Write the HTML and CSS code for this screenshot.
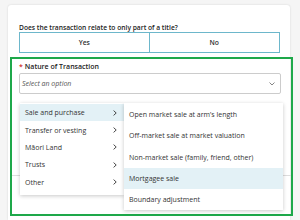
FILE: index.html
```html
<!DOCTYPE html>
<html lang="en">
<head>
    <meta charset="UTF-8">
    <title>Transaction details</title>
    <link rel="stylesheet" href="styles.css">
</head>
<body>

<div class="card">
    <div class="question">
        <div class="question-label">Does the transaction relate to only part of a title?</div>
        <div class="toggle">
            <button class="toggle-btn">Yes</button>
            <button class="toggle-btn">No</button>
        </div>
    </div>

    <div class="field active">
        <label class="field-label"><span class="required">*</span>Nature of Transaction</label>
        <div class="select">
            <span class="placeholder">Select an option</span>
            <svg class="select-arrow" width="6" height="4" viewBox="0 0 6 4">
                <path d="M0.5 0.5 L3 3 L5.5 0.5" fill="none" stroke="#777" stroke-width="0.9"/>
            </svg>
        </div>
        <div class="divider"></div>

        <div class="menus">
            <ul class="menu categories">
                <li class="selected">Sale and purchase <svg width="4" height="6" viewBox="0 0 4 6"><path d="M0.6 0.6 L3.2 3 L0.6 5.4" fill="none" stroke="#333" stroke-width="0.9"/></svg></li>
                <li>Transfer or vesting <svg width="4" height="6" viewBox="0 0 4 6"><path d="M0.6 0.6 L3.2 3 L0.6 5.4" fill="none" stroke="#333" stroke-width="0.9"/></svg></li>
                <li>Māori Land <svg width="4" height="6" viewBox="0 0 4 6"><path d="M0.6 0.6 L3.2 3 L0.6 5.4" fill="none" stroke="#333" stroke-width="0.9"/></svg></li>
                <li>Trusts <svg width="4" height="6" viewBox="0 0 4 6"><path d="M0.6 0.6 L3.2 3 L0.6 5.4" fill="none" stroke="#333" stroke-width="0.9"/></svg></li>
                <li>Other <svg width="4" height="6" viewBox="0 0 4 6"><path d="M0.6 0.6 L3.2 3 L0.6 5.4" fill="none" stroke="#333" stroke-width="0.9"/></svg></li>
            </ul>
            <ul class="menu options">
                <li>Open market sale at arm’s length</li>
                <li>Off-market sale at market valuation</li>
                <li>Non-market sale (family, friend, other)</li>
                <li class="selected">Mortgagee sale</li>
                <li>Boundary adjustment</li>
            </ul>
        </div>
    </div>
</div>

</body>
</html>
```

FILE: styles.css
```css
* {
    box-sizing: border-box;
}

body {
    margin: 0;
    background-color: #f5f5f5;
    font-family: "Open Sans", sans-serif;
    color: #333;
    overflow: hidden;
}

.card {
    margin: 5px 0 0 8px;
    width: 282px;
    height: 215px;
    background-color: #fff;
    border-radius: 3px 3px 0 0;
    box-shadow: 0 0 2px rgba(0, 0, 0, 0.15);
    padding-top: 19px;
}

.question {
    padding: 0 10px 0 11px;
}

.question-label {
    font-size: 6.7px;
    font-weight: 600;
    color: #222;
    line-height: 8px;
}

.toggle {
    display: grid;
    grid-template-columns: 1fr 1fr;
}

.toggle-btn {
    height: 21px;
    border: 1px solid #6db7cb;
    background-color: #fff;
    font-family: "Open Sans", sans-serif;
    font-size: 6.8px;
    font-weight: 600;
    color: #333;
    padding: 0;
}

.toggle-btn + .toggle-btn {
    border-left: none;
}

.field {
    position: relative;
    margin: 4px -3px 0 2px;
    border: 2px solid #1ea84a;
    padding: 3px 10px 38px 7px;
}

.field-label {
    display: block;
    font-size: 7px;
    font-weight: 600;
    color: #222;
    line-height: 10px;
    margin-bottom: 1px;
}

.required {
    color: #d0312d;
    margin-right: 2px;
}

.select {
    display: flex;
    align-items: center;
    justify-content: space-between;
    height: 21px;
    border: 1px solid #ccc;
    border-radius: 2px;
    padding: 0 5px 0 2px;
}

.placeholder {
    font-size: 7px;
    font-style: italic;
    color: #555;
}

.divider {
    margin: 81px -10px 0 -7px;
    border-top: 1px solid #ddd;
}

.menus {
    position: absolute;
    top: 44px;
    left: 8px;
    display: flex;
    align-items: flex-start;
}

.menu {
    list-style: none;
    margin: 0;
    padding: 0;
    background-color: #fff;
    box-shadow: 0 1px 4px rgba(0, 0, 0, 0.22);
    font-size: 7px;
    color: #333;
}

.menu li {
    display: flex;
    align-items: center;
    padding: 0 5px;
}

.menu li.selected {
    background-color: #e3f1f6;
}

.categories {
    width: 104px;
    padding: 1px 0 4px;
}

.categories li {
    justify-content: space-between;
    height: 17.4px;
    padding-right: 7px;
}

.options {
    width: 159px;
    padding: 1px 0 0;
}

.options li {
    height: 21.3px;
}
```
